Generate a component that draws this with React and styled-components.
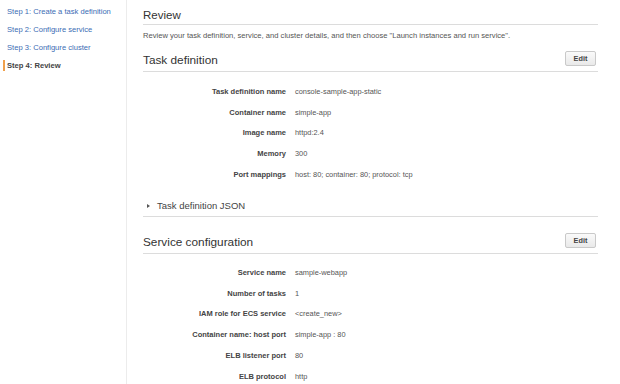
import React from "react";
import styled, { createGlobalStyle } from "styled-components";

const GlobalStyle = createGlobalStyle`
  html, body {
    margin: 0;
    padding: 0;
    background: #fff;
    font-family: "Liberation Sans", Arial, sans-serif;
  }
`;

const Page = styled.div`
  display: flex;
  width: 620px;
  height: 384px;
  overflow: hidden;
`;

const Sidebar = styled.nav`
  width: 127px;
  flex-shrink: 0;
  border-right: 1px solid #ececec;
  padding-top: 6px;
  box-sizing: border-box;
`;

const StepLink = styled.div`
  position: relative;
  height: 18px;
  line-height: 11px;
  padding-left: 7px;
  font-size: 7.6px;
  color: ${(p) => (p.active ? "#444" : "#3b6cb4")};
  font-weight: ${(p) => (p.active ? "bold" : "normal")};
  white-space: nowrap;

  &::before {
    content: "";
    display: ${(p) => (p.active ? "block" : "none")};
    position: absolute;
    left: 3px;
    top: 0;
    width: 2px;
    height: 11px;
    background: #f0a04b;
  }
`;

const Main = styled.main`
  flex: 1;
  padding: 0 22px 0 16px;
`;

const PageTitle = styled.h1`
  margin: 0;
  padding-top: 8px;
  height: 16px;
  font-size: 11.5px;
  font-weight: normal;
  color: #333;
  line-height: 14px;
  border-bottom: 1px solid #dcdcdc;
`;

const Intro = styled.p`
  margin: 0;
  padding-top: 6px;
  font-size: 7.6px;
  line-height: 10px;
  color: #555;
  white-space: nowrap;
`;

const SectionHead = styled.div`
  display: flex;
  align-items: flex-end;
  justify-content: space-between;
  height: ${(p) => p.h}px;
  padding-bottom: 4px;
  border-bottom: 1px solid #dcdcdc;
`;

const SectionTitle = styled.h2`
  margin: 0;
  font-size: 11.8px;
  font-weight: normal;
  color: #333;
  line-height: 14px;
`;

const EditButton = styled.button`
  width: 31px;
  height: 15px;
  margin-right: 2px;
  margin-bottom: 1px;
  padding: 0;
  font-family: inherit;
  font-size: 7.3px;
  font-weight: bold;
  color: #444;
  border: 1px solid #c9c9c9;
  border-radius: 2px;
  background: linear-gradient(#fafafa, #e9e9e9);
`;

const Details = styled.div`
  display: grid;
  grid-template-columns: 143px 1fr;
  column-gap: 9px;
  grid-auto-rows: 20.8px;
  align-items: center;
  padding-top: ${(p) => p.top}px;
`;

const Label = styled.div`
  text-align: right;
  font-size: 7.5px;
  font-weight: bold;
  color: #444;
  white-space: nowrap;
`;

const Value = styled.div`
  font-size: 7.4px;
  color: #555;
  white-space: nowrap;
`;

const Expander = styled.div`
  display: flex;
  align-items: center;
  gap: 7px;
  margin-top: 11px;
  height: 20px;
  padding-left: 4px;
  border-bottom: 1px solid #dcdcdc;
  font-size: 9.5px;
  color: #444;
`;

const Caret = styled.span`
  width: 0;
  height: 0;
  border-top: 2.5px solid transparent;
  border-bottom: 2.5px solid transparent;
  border-left: 3px solid #555;
`;

const steps = [
  "Step 1: Create a task definition",
  "Step 2: Configure service",
  "Step 3: Configure cluster",
  "Step 4: Review",
];

const taskRows = [
  ["Task definition name", "console-sample-app-static"],
  ["Container name", "simple-app"],
  ["Image name", "httpd:2.4"],
  ["Memory", "300"],
  ["Port mappings", "host: 80; container: 80; protocol: tcp"],
];

const serviceRows = [
  ["Service name", "sample-webapp"],
  ["Number of tasks", "1"],
  ["IAM role for ECS service", "<create_new>"],
  ["Container name: host port", "simple-app : 80"],
  ["ELB listener port", "80"],
  ["ELB protocol", "http"],
];

function DetailList({ rows, top }) {
  return (
    <Details top={top}>
      {rows.map(([k, v]) => (
        <React.Fragment key={k}>
          <Label>{k}</Label>
          <Value>{v}</Value>
        </React.Fragment>
      ))}
    </Details>
  );
}

export default function App() {
  return (
    <Page>
      <GlobalStyle />
      <Sidebar>
        {steps.map((s, i) => (
          <StepLink key={s} active={i === 3}>
            {s}
          </StepLink>
        ))}
      </Sidebar>
      <Main>
        <PageTitle>Review</PageTitle>
        <Intro>
          Review your task definition, service, and cluster details, and then choose "Launch instances and run service".
        </Intro>

        <SectionHead h={26}>
          <SectionTitle>Task definition</SectionTitle>
          <EditButton>Edit</EditButton>
        </SectionHead>
        <DetailList rows={taskRows} top={9} />
        <Expander>
          <Caret />
          Task definition JSON
        </Expander>

        <SectionHead h={32}>
          <SectionTitle>Service configuration</SectionTitle>
          <EditButton>Edit</EditButton>
        </SectionHead>
        <DetailList rows={serviceRows} top={8} />
      </Main>
    </Page>
  );
}
